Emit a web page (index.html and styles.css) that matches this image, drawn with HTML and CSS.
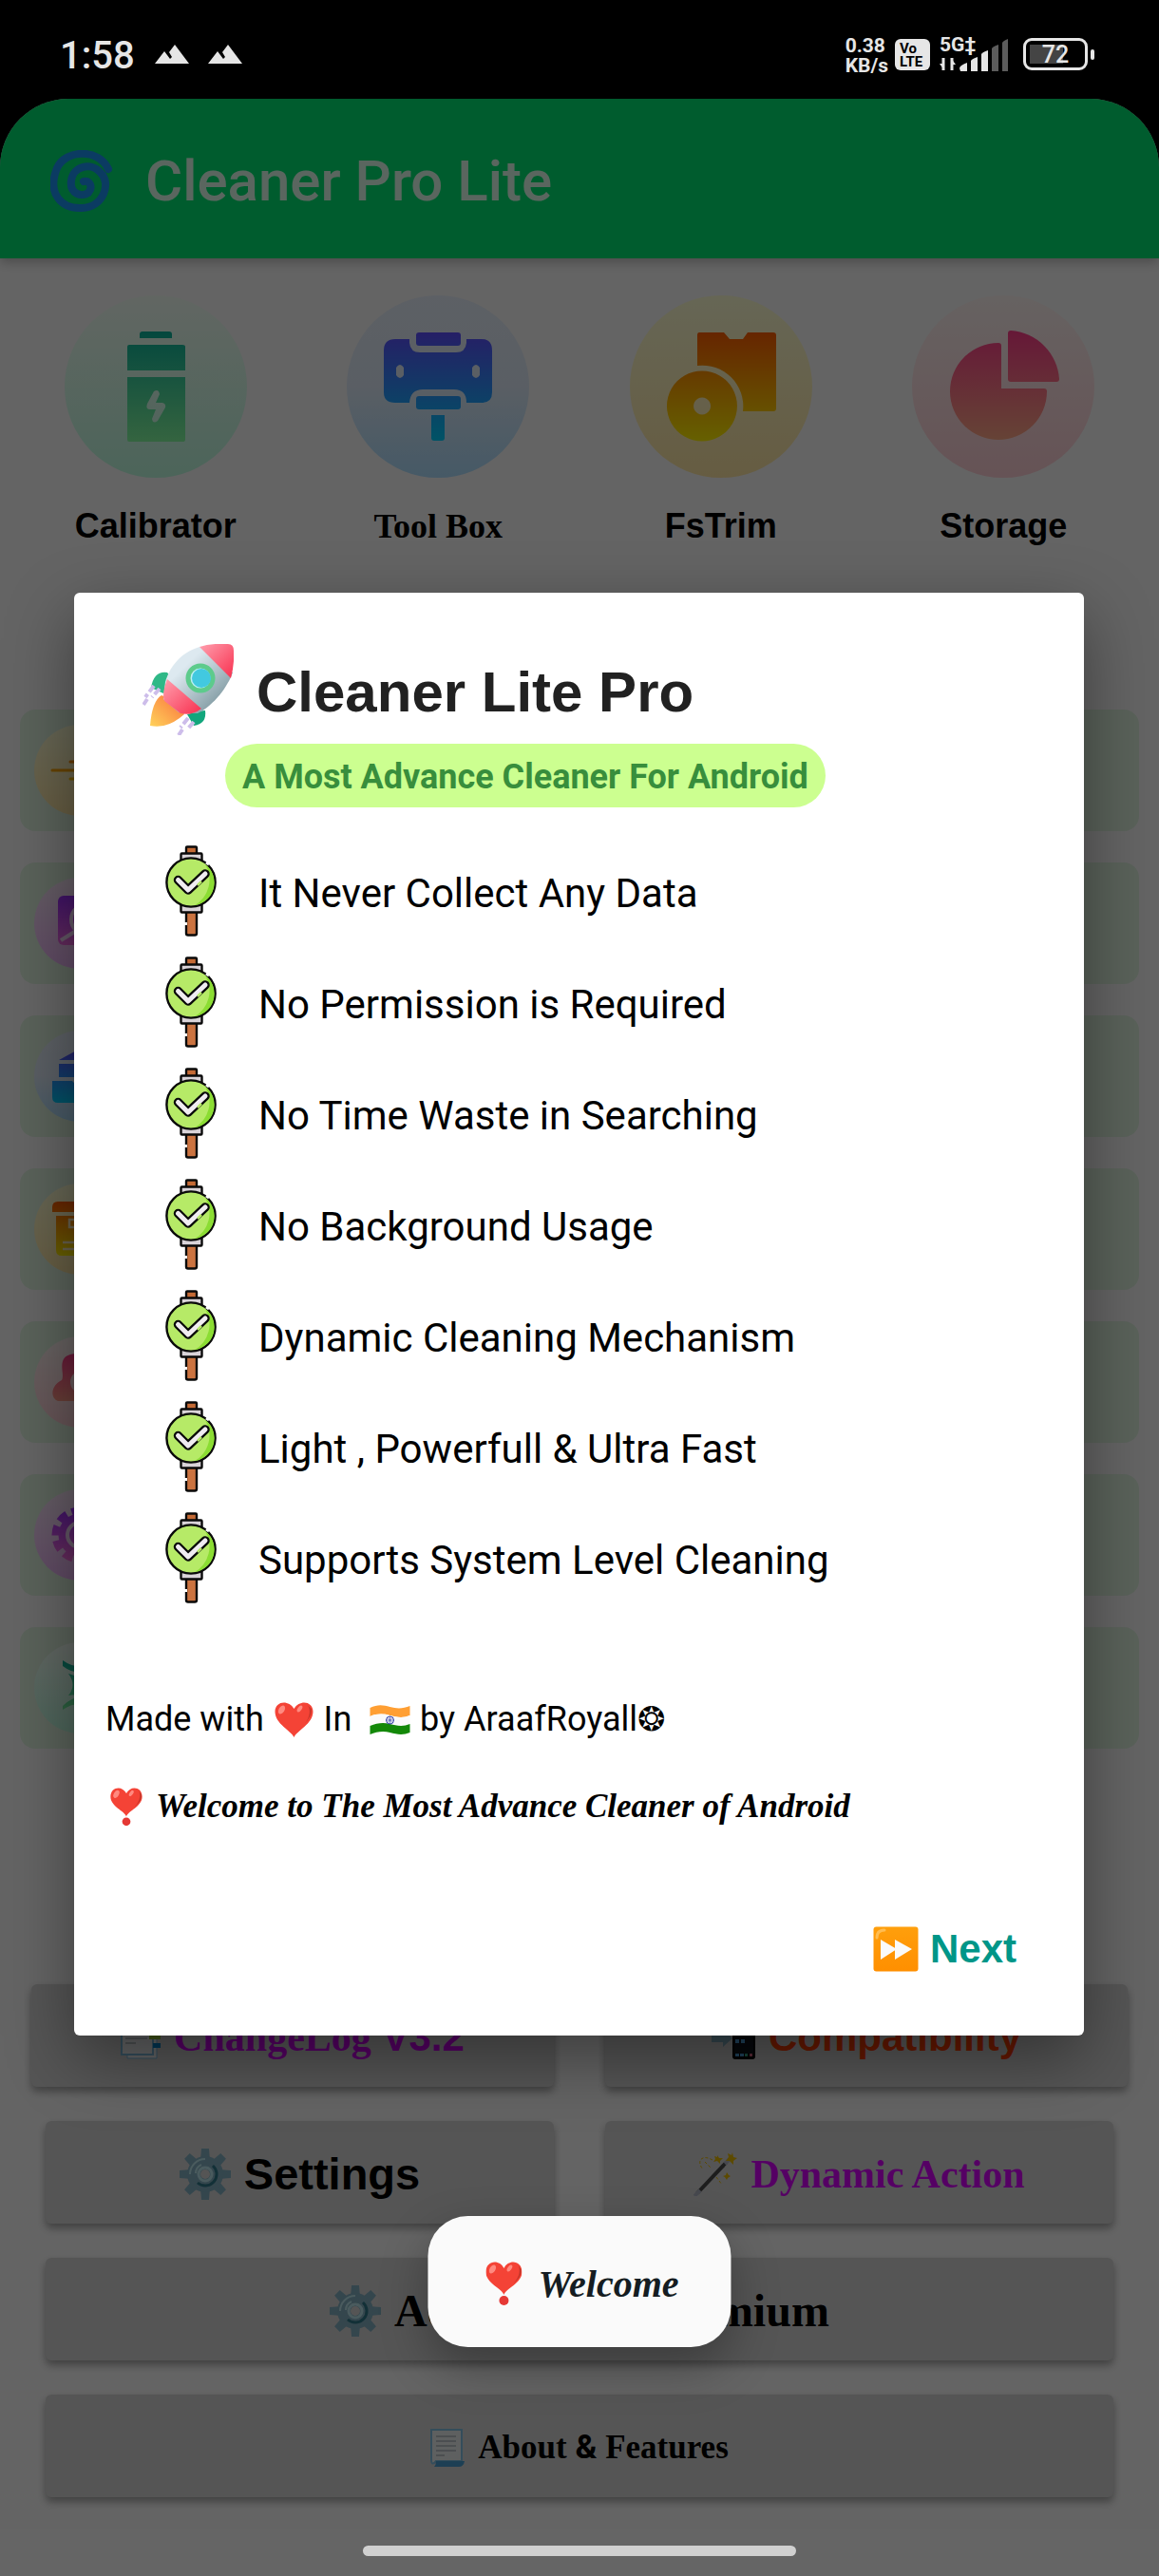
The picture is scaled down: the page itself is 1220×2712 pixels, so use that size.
FILE: index.html
```html
<!DOCTYPE html>
<html lang="en">
<head>
<meta charset="utf-8">
<meta name="viewport" content="width=device-width, initial-scale=1">
<title>Cleaner Pro Lite</title>
<link rel="stylesheet" href="styles.css">
</head>
<body>

<svg class="sprite" aria-hidden="true">
  <defs>
    <linearGradient id="g-teal" x1="0" y1="38" x2="0" y2="154" gradientUnits="userSpaceOnUse"><stop offset="0" stop-color="#0ab39b"/><stop offset="1" stop-color="#84fba0"/></linearGradient>
    <linearGradient id="g-blue" x1="0" y1="40" x2="0" y2="153" gradientUnits="userSpaceOnUse"><stop offset="0" stop-color="#5d4fff"/><stop offset="1" stop-color="#00d0ff"/></linearGradient>
    <linearGradient id="g-orange" x1="0" y1="40" x2="0" y2="153" gradientUnits="userSpaceOnUse"><stop offset="0" stop-color="#ff5f00"/><stop offset="1" stop-color="#fff000"/></linearGradient>
    <linearGradient id="g-red" x1="0" y1="37" x2="0" y2="152" gradientUnits="userSpaceOnUse"><stop offset="0" stop-color="#ff3d8a"/><stop offset="1" stop-color="#ffa887"/></linearGradient>
    <linearGradient id="g-purple" x1="0" y1="40" x2="0" y2="153" gradientUnits="userSpaceOnUse"><stop offset="0" stop-color="#a030ff"/><stop offset="1" stop-color="#ff70e0"/></linearGradient>
    <linearGradient id="g-nose" x1="0" y1="0" x2="1" y2="1"><stop offset="0" stop-color="#ff9fae"/><stop offset="1" stop-color="#f8304f"/></linearGradient>
    <linearGradient id="g-hull" x1="0" y1="0" x2="1" y2="1"><stop offset="0.3" stop-color="#dde9f0"/><stop offset="1" stop-color="#64828a"/></linearGradient>
    <linearGradient id="g-flame" x1="1" y1="0" x2="0" y2="1"><stop offset="0" stop-color="#f9703c"/><stop offset="1" stop-color="#ffd25a"/></linearGradient>
    <linearGradient id="g-next" x1="0" y1="0" x2="0" y2="1"><stop offset="0" stop-color="#ff9f0c"/><stop offset="1" stop-color="#ff8f00"/></linearGradient>
  </defs>

  <symbol id="heart" viewBox="0 0 44 42">
    <path d="M22 39C19 32 2 25 2 12C2 1 16-1 22 9C28-1 42 1 42 12C42 25 25 32 22 39Z" fill="#f44336"/>
    <path d="M36 5C40 9 39 18 33 25C37 20 41 16 40 9Z" fill="#c33529"/>
    <ellipse cx="9" cy="10" rx="3" ry="5" transform="rotate(30 9 10)" fill="#ff8a80"/>
    <ellipse cx="28" cy="9" rx="2" ry="4" transform="rotate(35 28 9)" fill="#ff8a80"/>
  </symbol>
  <symbol id="heart-bang" viewBox="0 0 38 48">
    <path d="M19 36C17 29 0 24 0 12C0 0 14-2 19 8C24-2 38 0 38 12C38 24 21 29 19 36Z" fill="#f44336"/>
    <path d="M33 4C37 8 36 17 29 24C34 20 38 15 37 9Z" fill="#c33529"/>
    <ellipse cx="7" cy="9" rx="3" ry="5" transform="rotate(30 7 9)" fill="#ff8a80"/>
    <ellipse cx="25" cy="8" rx="2" ry="4" transform="rotate(35 25 8)" fill="#ff8a80"/>
    <circle cx="19" cy="42" r="5" fill="#e53935"/>
  </symbol>
  <symbol id="flag" viewBox="0 0 44 32">
    <path d="M1 3C9-1 15 0 22 2S36 4 43 1V11C36 14 29 13 22 11S8 9 1 12Z" fill="#ff9f33"/>
    <path d="M1 12C8 9 15 9 22 11S36 14 43 11V20C36 23 29 22 22 20S8 19 1 22Z" fill="#fafafa"/>
    <path d="M1 22C8 19 15 18 22 20S36 23 43 20V29C36 32 29 31 22 29S8 28 1 31Z" fill="#138808"/>
    <circle cx="22" cy="16" r="4" fill="none" stroke="#3340a8" stroke-width="1"/><path d="M22 12V20M18 16H26M19 13L25 19M25 13L19 19" stroke="#3340a8" stroke-width="0.6"/>
  </symbol>
  <symbol id="gear" viewBox="0 0 54 54">
    <g fill="#82aec0">
      <path id="tooth" d="M22 13L23 0H31L32 13Z"/>
      <use href="#tooth" transform="rotate(45 27 27)"/><use href="#tooth" transform="rotate(90 27 27)"/><use href="#tooth" transform="rotate(135 27 27)"/><use href="#tooth" transform="rotate(180 27 27)"/><use href="#tooth" transform="rotate(225 27 27)"/><use href="#tooth" transform="rotate(270 27 27)"/><use href="#tooth" transform="rotate(315 27 27)"/>
      <circle cx="27" cy="27" r="19"/>
    </g>
    <path d="M11 27A16 16 0 0 1 27 11M17 26A10 10 0 0 1 23 17" fill="none" stroke="#b9e4ea" stroke-width="2"/>
    <path d="M35 18A12 12 0 1 1 19 36" fill="none" stroke="#2f7889" stroke-width="3"/>
    <circle cx="27" cy="27" r="7" fill="none" stroke="#b9e4ea" stroke-width="3"/><circle cx="27" cy="27" r="5" fill="#d5d5d5"/>
  </symbol>
  <symbol id="page" viewBox="0 0 36 40">
    <path d="M1 1H33V34H6Q1 40 1 32Z" fill="#eceff1" stroke="#82c0e4" stroke-width="2"/>
    <path d="M6 8H27M6 13H27M6 18H27M6 23H27M6 28H15" stroke="#8b9aa2" stroke-width="1"/>
    <path d="M6 34H36Q35 40 30 40H4Q6 38 6 34Z" fill="#4a9ed2"/>
  </symbol>
  <symbol id="tabs" viewBox="0 0 42 46">
    <path d="M7 5H38V45H7Z" fill="#f4f8fa" stroke="#82c0e4"/><path d="M1 1H34V41H1Z" fill="#f4f8fa" stroke="#82c0e4" stroke-width="2"/>
    <path d="M5 9H28M5 14H28M5 19H28M5 24H28M5 29H16" stroke="#8b9aa2"/>
    <path d="M30 20H42V25H30Z" fill="#9ccc3c"/><path d="M34 29H42V34H34Z" fill="#0288d1"/><path d="M30 10H42V15H30Z" fill="#f44336"/>
  </symbol>
  <symbol id="phone" viewBox="0 0 46 46">
    <rect x="22" y="0" width="24" height="46" rx="3" fill="#000"/><rect x="24" y="4" width="20" height="36" fill="#10161c"/>
    <g fill="#4fa3e0"><path d="M25 25H29V29H25ZM31 25H35V29H31ZM25 40H29V43H25ZM30 40H34V43H30Z"/></g><path d="M35 40H38V43H35Z" fill="#3ab08a"/><path d="M40 40H43V43H40Z" fill="#e06c88"/>
    <path d="M0 20H12V14L22 24L12 33V28H0Z" fill="#82aec0"/>
  </symbol>
  <symbol id="wand" viewBox="0 0 46 46">
    <path d="M4 43L34 11" stroke="#4a4a4a" stroke-width="4"/><path d="M1 46L7 40M33 12L38 7" stroke="#b0b4c4" stroke-width="4"/>
    <path d="M41 0L42 5L46 6L42 9L42 13L38 9L34 9L37 5L36 1L40 3ZM25 3L27 6L31 6L28 9L28 12L25 9L21 10L23 7L22 4L25 5ZM35 21L37 24L39 25L36 27L35 29L33 26L31 25L34 24Z" fill="#e6b800"/>
    <path d="M20 8C10 2 2 8 10 18M12 10L18 16M24 26L30 34" stroke="#e6b800" stroke-width="1" fill="none" stroke-dasharray="3 2"/>
  </symbol>
  <symbol id="check" viewBox="0 0 54 96">
    <g stroke="#0a0a0a" stroke-width="2.4" stroke-linejoin="round">
      <rect x="22" y="1.5" width="11" height="9" rx="1" fill="#c46a35"/>
      <rect x="16.500" y="8.500" width="22" height="9" rx="1" fill="#d9d3d8"/>
      <rect x="22" y="69" width="11" height="25.500" rx="2" fill="#cb7340"/>
      <rect x="16.500" y="61" width="22" height="9.500" rx="1" fill="#d9d3d8"/>
      <circle cx="27" cy="39" r="25.600" fill="#b6ea67"/>
    </g>
    <path d="M42 20A24 24 0 0 1 31 63A31 31 0 0 0 42 20Z" fill="#8bdd33"/>
    <path d="M13.500 36.500L24 47L42 30" fill="none" stroke="#0a0a0a" stroke-width="9.500" stroke-linecap="round" stroke-linejoin="round"/>
    <path d="M13.500 36.500L24 47L42 30" fill="none" stroke="#f0ecf1" stroke-width="5" stroke-linecap="round" stroke-linejoin="round"/>
    <path d="M34 42L38 38" stroke="#b6ea67" stroke-width="2.5"/><path d="M21 81V84" stroke="#fff" stroke-width="4"/><path d="M43 18L46 20" stroke="#fff" stroke-width="3"/>
  </symbol>
</svg>

<header class="status">
  <div class="status-group">
    <span class="time">1:58</span>
    <svg class="peaks" viewBox="0 0 36 20"><path d="M0 20L10 7L16 15L18 13L15 8L21 0L36 20Z" fill="#e6e6e6"/></svg>
    <svg class="peaks" viewBox="0 0 36 20"><path d="M0 20L10 7L16 15L18 13L15 8L21 0L36 20Z" fill="#e6e6e6"/></svg>
  </div>
  <div class="status-group status-right">
    <span class="rate">0.38<br>KB/s</span>
    <span class="volte">Vo<br>LTE</span>
    <div class="signal">
      <span class="network">5G‡</span>
      <svg class="bars" viewBox="0 0 73 34">
        <path d="M4 20V33M13 20V33" stroke="#e6e6e6" stroke-width="3"/><path d="M0 26L5 33V26ZM12 20L17 27H12Z" fill="#e6e6e6"/>
        <g fill="#e6e6e6"><path d="M21 31Q21 28 29 25V34H22ZM33 23Q34 21 40 19V34H33ZM44 16Q45 14 51 12V34H44Z"/></g>
        <g fill="#5c5c5c"><path d="M55 10Q56 8 62 6V34H55ZM66 4Q67 2 72 0V34H66Z"/></g>
      </svg>
    </div>
    <div class="battery"><span class="battery-body">72</span><i class="battery-tip"></i></div>
  </div>
</header>

<main class="app">
  <div class="appbar">
    <svg class="cyclone" viewBox="0 0 66 66"><path d="M61 20C51-2 16-1 7 19C-4 46 12 62 33 61C57 60 64 34 53 24C43 12 24 17 22 32C20 46 33 50 40 45C46 38 40 31 35 33" fill="none" stroke="#1c93f4" stroke-width="8" stroke-linecap="round"/></svg>
    <h1>Cleaner Pro Lite</h1>
  </div>

  <nav class="shortcuts">
    <a href="#calibrator"><svg class="disc mint" viewBox="0 0 192 192"><g fill="url(#g-teal)"><path d="M79 45V41Q79 38 82 38H110Q113 38 113 41V45ZM66 79V54Q66 52 68 52H124Q127 52 127 54V79Z"/><path fill-rule="evenodd" d="M66 86H127V152Q127 154 124 154H68Q66 154 66 152ZM94 101L87 114Q85 120 90 120H96L92 130Q93 136 98 132L106 118Q107 114 103 113H96L100 104Q99 98 94 101Z"/></g></svg>Calibrator</a>
    <a href="#toolbox" class="serif"><svg class="disc sky" viewBox="0 0 192 192"><g fill="url(#g-blue)"><path fill-rule="evenodd" d="M51 46H66V50Q67 60 77 60H115Q125 60 126 50V46H142Q153 46 153 58V102Q153 113 142 113H126Q126 99 113 99H80Q67 99 66 113H51Q39 113 39 102V58Q39 46 51 46ZM52 76V84Q56 90 60 84V76Q56 70 52 76ZM132 76V84Q136 90 140 84V76Q136 70 132 76Z"/><rect x="73" y="39" width="47" height="14" rx="3"/><rect x="73" y="106" width="47" height="14" rx="3"/><path d="M89 126H103V150Q103 153 100 153H92Q89 153 89 150Z"/></g></svg>Tool Box</a>
    <a href="#fstrim"><svg class="disc lemon" viewBox="0 0 192 192"><g fill="url(#g-orange)"><path d="M73 39H99L105 46H119L124 39H151Q154 39 154 42V119Q154 122 151 122H119A43 43 0 0 0 71 74V42Q71 39 73 39Z"/><path fill-rule="evenodd" d="M76 79.500A37 37 0 1 1 75.900 79.500ZM76 107.500A9 9 0 1 0 76.100 107.500Z"/></g></svg>FsTrim</a>
    <a href="#storage"><svg class="disc rose" viewBox="0 0 192 192"><g fill="url(#g-red)"><path d="M91 50Q94 50 94 53V98H139Q142 98 142 101A51 51 0 1 1 91 50Z"/><path d="M104 37A55 55 0 0 1 155 88Q155 91 152 91H104Q101 91 101 88V40Q101 37 104 37Z"/></g></svg>Storage</a>
  </nav>

  <div class="tasks">
    <div class="task"><svg class="disc lemon" viewBox="0 0 192 192"><path d="M76 78H150M38 96H150M76 114H150" stroke="url(#g-orange)" stroke-width="6" stroke-linecap="round"/><rect x="100" y="60" width="50" height="70" rx="35" fill="url(#g-orange)"/></svg></div>
    <div class="task"><svg class="disc lilac" viewBox="0 0 192 192"><rect x="50" y="38" width="92" height="104" rx="12" fill="url(#g-purple)"/><circle cx="110" cy="88" r="32" fill="none" stroke="#f6d8fa" stroke-width="8"/><path d="M56 132L88 112" stroke="#f6d8fa" stroke-width="8"/></svg></div>
    <div class="task"><svg class="disc sky" viewBox="0 0 192 192"><g fill="url(#g-blue)"><path d="M52 62L96 38V62ZM52 70H152V98H52ZM38 106H80L92 118H152V152H50Q38 152 38 140Z"/></g></svg></div>
    <div class="task"><svg class="disc lemon" viewBox="0 0 192 192"><path fill="url(#g-orange)" d="M50 38H142Q154 38 154 50V60H38V50Q38 38 50 38ZM46 68H146V140Q146 152 134 152H58Q46 152 46 140Z"/><path d="M118 76H74V92H118M60 124H100M60 138H100" stroke="#ffedc0" stroke-width="5" fill="none"/></svg></div>
    <div class="task"><svg class="disc rose" viewBox="0 0 192 192"><path fill="url(#g-red)" d="M76 38C100 30 130 60 120 136H50C34 130 34 104 58 92C66 82 46 46 76 38Z"/><circle cx="100" cy="96" r="20" fill="none" stroke="#ffdce0" stroke-width="8"/></svg></div>
    <div class="task"><svg class="disc lilac" viewBox="0 0 192 192"><circle cx="96" cy="96" r="50" fill="none" stroke="url(#g-purple)" stroke-width="18" stroke-dasharray="20 11"/><circle cx="96" cy="96" r="45" fill="url(#g-purple)"/><circle cx="96" cy="96" r="26" fill="none" stroke="#f6d8fa" stroke-width="8"/></svg></div>
    <div class="task"><svg class="disc mint" viewBox="0 0 192 192"><path fill="url(#g-teal)" d="M60 38Q96 64 140 38V48Q96 78 60 50ZM72 66Q96 76 130 66V116Q96 108 72 112Q90 90 72 66ZM60 134Q96 98 140 128V146Q96 116 60 142Z"/></svg></div>
  </div>

  <div class="actions">
    <div class="action-row wide">
      <button class="t42 violet" type="button"><svg width="42" height="46"><use href="#tabs"/></svg><span><b class="serif">ChangeLog</b> V3.2</span></button>
      <button class="t42 coral" type="button"><svg width="46" height="46"><use href="#phone"/></svg>Compatibility</button>
    </div>
    <div class="action-row">
      <button class="t48" type="button"><svg width="54" height="54"><use href="#gear"/></svg>Settings</button>
      <button class="t42 violet serif" type="button"><svg width="46" height="46"><use href="#wand"/></svg>Dynamic Action</button>
    </div>
    <div class="action-row">
      <button class="t48 serif" type="button"><svg width="54" height="54"><use href="#gear"/></svg><span>Advanced<span class="amp-wide"> &amp; </span>Premium</span></button>
    </div>
    <div class="action-row">
      <button class="t36 serif" type="button"><svg width="36" height="40"><use href="#page"/></svg><span>About <span class="amp">&amp;</span> Features</span></button>
    </div>
  </div>
</main>

<div class="overlay">
  <section class="dialog" role="dialog" aria-labelledby="dialog-title">
    <div class="dialog-head">
      <svg class="rocket" viewBox="0 0 96 96">
        <path d="M26 30Q12 28 9 46L22 52L34 40Z" fill="#2fb887"/><path d="M47 74Q62 70 66 70Q68 84 54 86Z" fill="#12a67c"/>
        <path d="M20 54Q10 60 8 86Q26 90 44 74Q40 62 20 54Z" fill="url(#g-flame)"/>
        <path d="M12 44L3 56M18 47L10 56M5 58L1 64M48 78L40 88M54 82L47 90M42 90L38 96" stroke="#cdbdea" stroke-width="4" stroke-dasharray="8 3"/>
        <path d="M60 3C38 10 28 26 24 40L22 58L38 72L58 73C76 64 90 44 95 30Z" fill="url(#g-hull)"/>
        <path d="M60 3Q72-1 90 0Q96 0 96 7Q97 20 93 36Z" fill="url(#g-nose)"/>
        <path d="M26 37Q20 52 23 60L40 73Q52 76 62 68Z" fill="url(#g-nose)"/>
        <circle cx="61" cy="36" r="13" fill="#bdf0f5" stroke="#5dcb8c" stroke-width="5"/><circle cx="62" cy="36" r="10" fill="#42c9e0"/>
      </svg>
      <h2 id="dialog-title">Cleaner Lite Pro</h2>
    </div>
    <p class="tagline">A Most Advance Cleaner For Android</p>
    <ul class="features">
      <li><svg class="check"><use href="#check"/></svg><span>It Never Collect Any Data</span></li>
      <li><svg class="check"><use href="#check"/></svg><span>No Permission is Required</span></li>
      <li><svg class="check"><use href="#check"/></svg><span>No Time Waste in Searching</span></li>
      <li><svg class="check"><use href="#check"/></svg><span>No Background Usage</span></li>
      <li><svg class="check"><use href="#check"/></svg><span>Dynamic Cleaning Mechanism</span></li>
      <li><svg class="check"><use href="#check"/></svg><span>Light , Powerfull &amp; Ultra Fast</span></li>
      <li><svg class="check"><use href="#check"/></svg><span>Supports System Level Cleaning</span></li>
    </ul>
    <p class="credit">Made with <svg class="emoji" viewBox="0 0 44 42"><use href="#heart"/></svg> In &nbsp;<svg class="emoji" viewBox="0 0 44 42"><use href="#flag"/></svg> by AraafRoyall<span class="star">❂</span></p>
    <p class="greeting"><svg class="bang" width="34" height="42"><use href="#heart-bang"/></svg>Welcome to The Most Advance Cleaner of Android</p>
    <div class="dialog-actions">
      <button class="next" type="button"><svg width="48" height="48" viewBox="0 0 48 48"><rect x="0.500" y="0.500" width="47" height="47" rx="3" fill="url(#g-next)"/><path d="M4 12Q4 4 12 4" fill="none" stroke="#ffbd52" stroke-width="3" stroke-linecap="round"/><path d="M8 14L25 24L8 35ZM23 14L41 24L23 35Z" fill="#fafafa"/></svg>Next</button>
    </div>
  </section>
</div>

<div class="toast" role="status"><svg width="38" height="48"><use href="#heart-bang"/></svg>Welcome</div>
<div class="navbar"><i></i></div>

</body>
</html>
```
FILE: styles.css
```css
* { box-sizing: border-box; }

body {
  margin: 0;
  min-height: 100vh;
  display: flex;
  flex-direction: column;
  position: relative;
  background: #000;
  color: #000;
  font-family: Roboto, sans-serif;
}

h1, h2, p, ul { margin: 0; padding: 0; }
svg { display: block; flex: none; }
button { border: 0; margin: 0; padding: 0; font: inherit; }
.sprite { position: absolute; width: 0; height: 0; }
.serif { font-family: "Liberation Serif", serif; }

/* Status bar */
.status {
  height: 104px;
  padding: 36px 68px 0 63px;
  display: flex;
  justify-content: space-between;
  align-items: flex-start;
  color: #e6e6e6;
  position: relative;
  z-index: 3;
}
.status-group { display: flex; align-items: flex-start; gap: 20px; }
.time { font-size: 40px; line-height: 46px; font-weight: 500; margin-right: 1px; }
.peaks { width: 36px; height: 20px; margin-top: 11px; }
.status-right { gap: 7px; }
.rate { font-size: 21px; line-height: 21px; font-weight: 700; margin-top: 2px; }
.volte {
  width: 37px;
  height: 33px;
  margin-top: 5px;
  padding: 3px 0 0 5px;
  border-radius: 6px;
  background: #e6e6e6;
  color: #000;
  font-size: 15px;
  line-height: 14px;
  font-weight: 700;
}
.signal { position: relative; width: 75px; height: 40px; margin-left: 3px; }
.network { position: absolute; left: 0; top: -1px; font-size: 21px; line-height: 24px; font-weight: 700; }
.bars { width: 73px; height: 34px; margin-top: 5px; }
.battery { display: flex; align-items: center; gap: 3px; margin: 4px 0 0 6px; }
.battery-body {
  width: 68px;
  height: 34px;
  border: 3px solid #e6e6e6;
  border-radius: 9px;
  background: linear-gradient(90deg, #444 60%, transparent 60%) 4px 4px / 58px 20px no-repeat;
  font-size: 25px;
  line-height: 29px;
  font-weight: 500;
  text-align: center;
}
.battery-tip { width: 4px; height: 11px; border-radius: 2px; background: #e6e6e6; }

/* Application behind the dialog */
.app {
  flex: 1;
  background: #fafafa;
  border-radius: 72px 72px 0 0;
  padding-bottom: 83px;
}
.appbar {
  height: 168px;
  padding: 5px 53px 0;
  display: flex;
  align-items: center;
  gap: 34px;
  background: #00e673;
  border-radius: 72px 72px 0 0;
  box-shadow: 0 4px 12px rgba(0, 0, 0, .25);
}
.appbar h1 { font-size: 60px; line-height: 72px; font-weight: 500; color: #e1ffee; }
.cyclone { width: 66px; height: 66px; }

.shortcuts { display: grid; grid-template-columns: repeat(4, 1fr); padding: 39px 15px 0; }
.shortcuts a {
  display: flex;
  flex-direction: column;
  align-items: center;
  gap: 30px;
  color: #000;
  font-family: "Liberation Sans", sans-serif;
  font-size: 36px;
  line-height: 42px;
  font-weight: 700;
  text-decoration: none;
}
.shortcuts a.serif { font-family: "Liberation Serif", serif; }
.disc { width: 192px; height: 192px; border-radius: 50%; }
.mint { background: linear-gradient(#f4fff6, #befce1); }
.sky { background: linear-gradient(#e8f0fc, #e0ecfa 50%, #aedfff); }
.lemon { background: linear-gradient(#ffffd5, #ffe7a5); }
.rose { background: linear-gradient(#fff5f3, #ffcfd6); }
.lilac { background: linear-gradient(#fae8fa, #f0b8fa); }

.tasks { display: grid; gap: 33px; padding: 172px 21px 0; }
.task { height: 128px; padding: 16px 15px; border-radius: 16px; background: #e1f5e2; }
.task .disc { width: 96px; height: 96px; }

.actions { display: grid; gap: 36px; padding: 248px 33px 0; }
.action-row { display: flex; gap: 54px; padding: 0 15px; }
.action-row.wide { padding: 0; }
.action-row button {
  flex: 1 1 0;
  min-width: 0;
  height: 108px;
  padding-top: 3px;
  display: flex;
  align-items: center;
  justify-content: center;
  gap: 14px;
  border-radius: 6px;
  background: #d5d5d5;
  color: #000;
  font-family: "Liberation Sans", sans-serif;
  font-weight: 700;
  white-space: nowrap;
  box-shadow: 0 5px 8px rgba(0, 0, 0, .35);
}
.action-row button.serif { font-family: "Liberation Serif", serif; }
.action-row .t36 { font-size: 35px; }
.action-row .t42 { font-size: 42px; }
.action-row .t48 { font-size: 47px; }
.action-row .t48.serif { font-size: 48px; }
.action-row .violet { color: #d500f9; }
.action-row .coral { color: #ff3d00; }
.amp { font-family: Roboto, sans-serif; }
.amp-wide { font-family: "Liberation Sans", sans-serif; }

/* Dialog */
.overlay {
  position: absolute;
  inset: 0;
  z-index: 2;
  display: flex;
  align-items: center;
  padding: 104px 79px 49px 78px;
  background: rgba(0, 0, 0, .6);
}
.dialog {
  flex: 1;
  padding: 54px 33px 41px;
  border-radius: 6px;
  background: #fff;
  box-shadow: 0 24px 70px rgba(0, 0, 0, .4);
}
.dialog-head { display: flex; align-items: center; gap: 24px; padding-left: 39px; }
.dialog-head h2 {
  padding-top: 5px;
  font-family: "Liberation Sans", sans-serif;
  font-size: 60px;
  line-height: 72px;
  font-weight: 700;
  color: #212121;
}
.rocket { width: 96px; height: 96px; }
.tagline {
  width: max-content;
  margin: 9px 0 0 126px;
  padding: 3px 18px 0;
  border-radius: 34px;
  background: #ccff90;
  color: #388e3c;
  font-size: 36px;
  line-height: 64px;
  font-weight: 700;
}
.features { display: grid; gap: 21px; margin: 40px 0 0 63px; list-style: none; }
.features li { display: flex; align-items: center; gap: 44px; font-size: 42px; line-height: 48px; }
.features span { padding-top: 5px; }
.check { width: 54px; height: 96px; }
.credit { margin-top: 101px; font-size: 36px; line-height: 42px; }
.emoji { display: inline-block; width: 45px; height: 42px; vertical-align: -10px; }
.star { font-family: "DejaVu Sans", sans-serif; font-size: 35px; line-height: 1; font-weight: 700; }
.greeting {
  display: flex;
  align-items: center;
  gap: 14px;
  margin-top: 49px;
  padding-left: 5px;
  font-family: "Liberation Serif", serif;
  font-size: 35px;
  line-height: 42px;
  font-weight: 700;
  font-style: italic;
}
.dialog-actions { display: flex; justify-content: flex-end; margin-top: 79px; padding-right: 38px; }
.next {
  height: 100px;
  display: flex;
  align-items: center;
  gap: 12px;
  background: none;
  color: #009688;
  font-family: "Liberation Sans", sans-serif;
  font-size: 42px;
  font-weight: 700;
}

/* Toast and gesture bar */
.toast {
  position: absolute;
  left: 50%;
  bottom: 241px;
  z-index: 3;
  transform: translateX(-50%);
  height: 138px;
  padding: 4px 55px 0 61px;
  display: flex;
  align-items: center;
  gap: 17px;
  border-radius: 42px;
  background: #fafafa;
  color: #151d22;
  font-family: "Liberation Serif", serif;
  font-size: 40px;
  font-weight: 700;
  font-style: italic;
  box-shadow: 0 20px 50px rgba(0, 0, 0, .3);
}
.navbar {
  position: absolute;
  left: 0;
  right: 0;
  bottom: 0;
  z-index: 3;
  height: 49px;
  display: flex;
  justify-content: center;
  padding-top: 17px;
  background: rgba(255, 255, 255, .01);
}
.navbar i { width: 456px; max-width: 60%; height: 11px; border-radius: 6px; background: #d0d0d0; }
```
